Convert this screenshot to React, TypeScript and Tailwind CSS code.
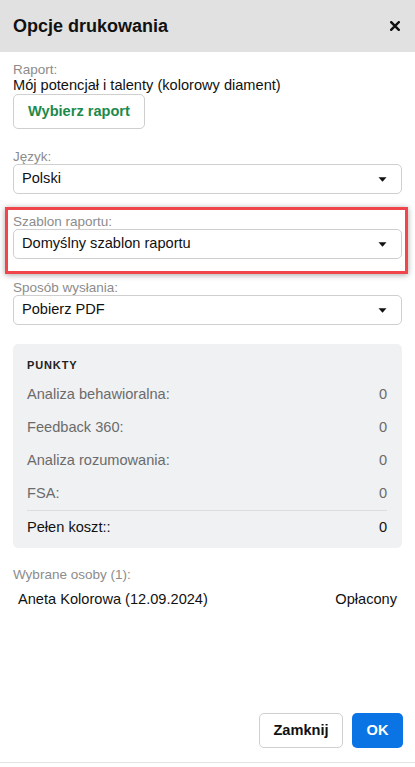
import React from 'react';

const Caret = () => (
  <svg width="9" height="5" viewBox="0 0 9 5" className="shrink-0">
    <path d="M0.5 0.3 L8.5 0.3 L4.5 4.7 Z" fill="#111" />
  </svg>
);

function SelectField({ label, value }: { label: string; value: string }) {
  return (
    <div>
      <div className="text-[13.5px] leading-[13px] text-[#8c8c8c] pt-[1px]">{label}</div>
      <div className="mt-px h-[30px] border border-[#cfcfcf] rounded-[5px] flex items-center justify-between pl-[8px] pr-[14px] text-[14.6px] text-[#111]">
        <span>{value}</span>
        <Caret />
      </div>
    </div>
  );
}

const rows = [
  { name: 'Analiza behawioralna:', value: '0' },
  { name: 'Feedback 360:', value: '0' },
  { name: 'Analiza rozumowania:', value: '0' },
  { name: 'FSA:', value: '0' },
];

export default function App() {
  return (
    <div className="w-[415px] min-h-[767px] bg-white flex flex-col pb-[4px] font-['Liberation_Sans',Arial,sans-serif] text-[#111]">
      <div className="h-[52px] bg-[#e1e1e1] flex items-center justify-between pl-[13px] pr-[14px]">
        <h1 className="text-[18px] font-bold text-[#111]">Opcje drukowania</h1>
        <button type="button" className="w-[12px] h-[12px] flex items-center justify-center">
          <svg width="10" height="10" viewBox="0 0 10 10">
            <path d="M1.2 1.2 L8.8 8.8 M8.8 1.2 L1.2 8.8" stroke="#111" strokeWidth="2.4" strokeLinecap="square" />
          </svg>
        </button>
      </div>

      <div className="flex-1 flex flex-col px-[13px] pt-[11px]">
        <div className="text-[13.5px] leading-[14px] text-[#8c8c8c]">Raport:</div>
        <div className="text-[14.6px] leading-[16px]">Mój potencjał i talenty (kolorowy diament)</div>
        <div>
          <button
            type="button"
            className="mt-[1px] h-[35px] px-[14px] border border-[#cfcfcf] rounded-[5px] text-[14.6px] font-bold text-[#1d8a4b] bg-white"
          >
            Wybierz raport
          </button>
        </div>

        <div className="mt-[20px]">
          <SelectField label="Język:" value="Polski" />
        </div>

        <div className="mt-[20px] relative">
          <div className="absolute -top-[7px] -left-[8px] -right-[6px] -bottom-[15px] border-[3px] border-[#f0464b] shadow-[0_1px_6px_rgba(0,0,0,0.35)] pointer-events-none" />
          <SelectField label="Szablon raportu:" value="Domyślny szablon raportu" />
        </div>

        <div className="mt-[21px]">
          <SelectField label="Sposób wysłania:" value="Pobierz PDF" />
        </div>

        <div className="mt-[19px] bg-[#f0f1f3] rounded-[5px] pl-[14px] pr-[15px] pt-[14px] pb-[4px]">
          <div className="text-[11px] font-bold tracking-[0.08em] text-[#222] leading-[14px]">PUNKTY</div>
          <div className="mt-[6px]">
            {rows.map((r) => (
              <div key={r.name} className="h-[33px] flex items-center justify-between text-[14.6px] text-[#6b6b6b]">
                <span>{r.name}</span>
                <span>{r.value}</span>
              </div>
            ))}
            <div className="border-t border-[#dcdde0] h-[34px] flex items-center justify-between text-[14.6px] text-[#111]">
              <span>Pełen koszt::</span>
              <span>0</span>
            </div>
          </div>
        </div>

        <div className="mt-[20px] text-[13.5px] leading-[14px] text-[#8c8c8c]">Wybrane osoby (1):</div>
        <div className="mt-[8px] pl-[5px] pr-[5px] flex items-center justify-between text-[14.6px] leading-[18px]">
          <span>Aneta Kolorowa (12.09.2024)</span>
          <span>Opłacony</span>
        </div>
      </div>

      <div className="flex justify-end gap-[9px] px-[12px] pb-[14px] border-b border-[#e3e3e3]">
        <button
          type="button"
          className="h-[35px] w-[84px] border border-[#cfcfcf] rounded-[5px] bg-white text-[14.6px] font-bold text-[#111]"
        >
          Zamknij
        </button>
        <button
          type="button"
          className="h-[35px] w-[51px] rounded-[5px] bg-[#0b74e5] text-[14.6px] font-bold text-white"
        >
          OK
        </button>
      </div>
    </div>
  );
}
